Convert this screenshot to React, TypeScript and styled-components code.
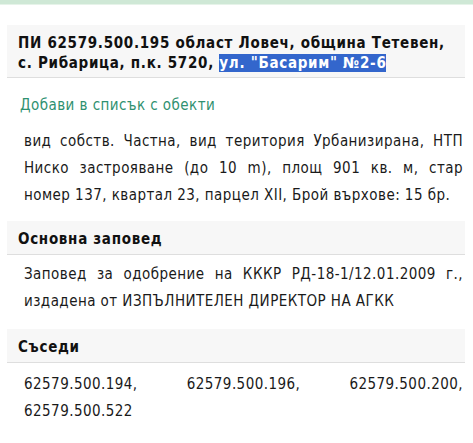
import React from "react";
import styled, { createGlobalStyle } from "styled-components";

const Global = createGlobalStyle`
  html, body { margin: 0; padding: 0; background: #ffffff; }
  body {
    font-family: "DejaVu Sans Condensed", "DejaVu Sans", "Liberation Sans", sans-serif;
    color: #1a1a1a;
    font-size: 15px;
  }
`;

const TopBar = styled.div`
  height: 4px;
  background: #cfe8d6;
  border-bottom: 1px solid #e6f3e9;
`;

const Page = styled.div`
  display: flex;
  flex-direction: column;
  padding: 0 8px 0 7px;
`;

const TitleBox = styled.div<{ $top: number }>`
  margin-top: ${(p) => p.$top}px;
  background: #f7f7f7;
  border-bottom: 1px solid #dedede;
  padding: 8px 0 4px 11px;
  font-weight: bold;
  font-size: 15px;
  line-height: 20px;
  letter-spacing: 0.7px;
  color: #111;
`;

const SectionBox = styled.div<{ $top: number }>`
  margin-top: ${(p) => p.$top}px;
  background: #f7f7f7;
  border-bottom: 1px solid #dedede;
  padding: 8px 0 5px 11px;
  font-weight: bold;
  font-size: 15px;
  line-height: 20px;
  letter-spacing: 0.7px;
  color: #111;
`;

const Selected = styled.span`
  background: #3366cc;
  color: #ffffff;
`;

const AddLink = styled.a`
  display: block;
  margin-top: 17px;
  padding-left: 13px;
  font-size: 15px;
  line-height: 20px;
  letter-spacing: 0.45px;
  color: #2f9170;
  text-decoration: none;
  cursor: pointer;
`;

const Para = styled.div<{ $top: number }>`
  margin-top: ${(p) => p.$top}px;
  padding: 0 2px 0 17px;
  font-size: 15px;
  line-height: 27px;
  letter-spacing: 0.45px;
  color: #1a1a1a;
`;

const Line = styled.div<{ $justify?: boolean }>`
  text-align: ${(p) => (p.$justify ? "justify" : "left")};
  text-align-last: ${(p) => (p.$justify ? "justify" : "left")};
  white-space: nowrap;
`;

export default function App() {
  return (
    <>
      <Global />
      <TopBar />
      <Page>
        <TitleBox $top={20}>
          ПИ 62579.500.195 област Ловеч, община Тетевен,
          <br />
          с. Рибарица, п.к. 5720, <Selected>ул. "Басарим" №2-6</Selected>
        </TitleBox>
        <AddLink>Добави в списък с обекти</AddLink>
        <Para $top={13}>
          <Line $justify>вид собств. Частна, вид територия Урбанизирана, НТП</Line>
          <Line $justify>Ниско застрояване (до 10 m), площ 901 кв. м, стар</Line>
          <Line>номер 137, квартал 23, парцел XII, Брой върхове: 15 бр.</Line>
        </Para>
        <SectionBox $top={12}>Основна заповед</SectionBox>
        <Para $top={6}>
          <Line $justify>Заповед за одобрение на КККР РД-18-1/12.01.2009 г.,</Line>
          <Line>издадена от ИЗПЪЛНИТЕЛЕН ДИРЕКТОР НА АГКК</Line>
        </Para>
        <SectionBox $top={14}>Съседи</SectionBox>
        <Para $top={8}>
          <Line $justify>62579.500.194, 62579.500.196, 62579.500.200,</Line>
          <Line>62579.500.522</Line>
        </Para>
      </Page>
    </>
  );
}
